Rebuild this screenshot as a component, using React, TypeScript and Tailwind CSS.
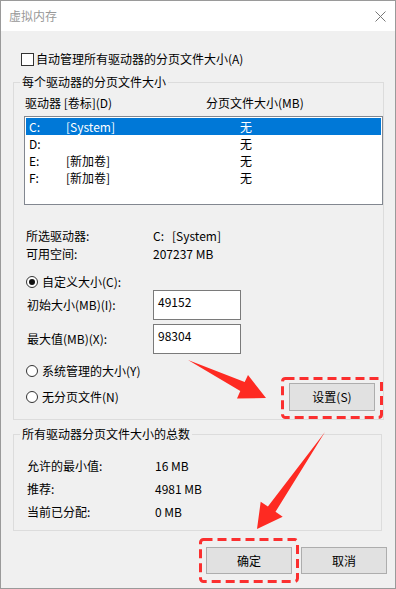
import React from "react"

const drives = [
    { id: "C:", label: "[System]", size: "无", selected: true },
    { id: "D:", label: "", size: "无" },
    { id: "E:", label: "[新加卷]", size: "无" },
    { id: "F:", label: "[新加卷]", size: "无" },
]

const totals = [
    { label: "允许的最小值:", value: "16 MB" },
    { label: "推荐:", value: "4981 MB" },
    { label: "当前已分配:", value: "0 MB" },
]

const Radio = ({ checked, label }: { checked?: boolean; label: string }) => (
    <div className="flex items-center gap-[4px]">
        <span className="flex items-center justify-center w-[12px] h-[12px] rounded-full border border-[#333] bg-white">
            {checked && <span className="w-[6px] h-[6px] rounded-full bg-[#111]" />}
        </span>
        <span>{label}</span>
    </div>
)

// red dashed annotation frame, drawn so the dash length matches the screenshot
const DashFrame = ({ w, h, className }: { w: number; h: number; className: string }) => (
    <svg className={`absolute pointer-events-none ${className}`} width={w} height={h}>
        <rect
            x="1.5"
            y="1.5"
            width={w - 3}
            height={h - 3}
            rx="3"
            fill="none"
            stroke="#fb2f2f"
            strokeWidth="3"
            strokeDasharray="9 5"
        />
    </svg>
)

const WinButton = ({
    children,
    className = "",
    frame,
}: {
    children: React.ReactNode
    className?: string
    frame?: React.ReactNode
}) => (
    <button
        className={`relative flex items-center justify-center border border-[#adadad] bg-[#e1e1e1] text-[12px] text-black ${className}`}
    >
        {children}
        {frame}
    </button>
)

// the two red annotation arrows lie over the dialog
const Arrows = () => (
    <svg
        className="absolute inset-0 pointer-events-none"
        width="396"
        height="589"
        viewBox="0 0 396 589"
    >
        <polygon
            fill="#fe2a22"
            points="188,360 244.7,381.9 248,375 266,398 237,398.5 240.3,391.1"
        />
        <polygon
            fill="#fe2a22"
            points="325,432 275.5,511.8 282.7,516.7 257,529 260.7,501.7 267.9,506.6"
        />
    </svg>
)

export default function App() {
    return (
        <div className="relative w-[396px] h-[589px] font-['Noto_Sans_CJK_SC','Noto_Sans',sans-serif] text-[12px] leading-[16px] text-black">
            <div className="flex flex-col w-full h-full border border-[#9a9a9a] bg-[#f0f0f0]">
                {/* title bar */}
                <div className="flex items-center justify-between h-[30px] bg-white pl-[8px] pr-[9px]">
                    <span className="text-[#999]">虚拟内存</span>
                    <svg width="11" height="11" viewBox="0 0 11 11">
                        <path d="M0.5 0.5 L10.5 10.5 M10.5 0.5 L0.5 10.5" stroke="#777" strokeWidth="1" />
                    </svg>
                </div>

                <div className="flex flex-col pl-[12px] pr-[13px]">
                    <div className="flex items-center h-[16px] mt-[20px] ml-[8px] gap-[2px]">
                        <span className="w-[13px] h-[13px] border border-[#333] bg-white" />
                        <span>自动管理所有驱动器的分页文件大小(A)</span>
                    </div>

                    <fieldset className="mt-[7px] p-0 border border-[#dcdcdc] pb-[8px]">
                        <legend className="ml-[6px] px-[2px]">每个驱动器的分页文件大小</legend>
                        <div className="flex items-center h-[16px] mt-[5px] pl-[11px]">
                            <span className="w-[181px]">驱动器 [卷标](D)</span>
                            <span>分页文件大小(MB)</span>
                        </div>
                        <div className="mt-[5px] ml-[10px] w-[359px] h-[89px] border border-[#828790] bg-white pt-[1px] px-[1px]">
                            {drives.map(d => (
                                <div
                                    key={d.id}
                                    className={`flex items-center h-[17px] pl-[3px] ${d.selected ? "bg-[#0078d7] text-white" : ""}`}
                                >
                                    <span className="w-[37px]">{d.id}</span>
                                    <span className="w-[174px]">{d.label}</span>
                                    <span>{d.size}</span>
                                </div>
                            ))}
                        </div>

                        <div className="flex items-center h-[18px] mt-[22px] pl-[12px]">
                            <span className="w-[127px]">所选驱动器:</span>
                            <span>C:&nbsp;&nbsp;&nbsp;[System]</span>
                        </div>
                        <div className="flex items-center h-[18px] pl-[12px]">
                            <span className="w-[127px]">可用空间:</span>
                            <span>207237 MB</span>
                        </div>

                        <div className="flex items-center h-[16px] mt-[11px] pl-[12px]">
                            <Radio checked label="自定义大小(C):" />
                        </div>
                        <div className="flex items-center h-[30px] pl-[13px]">
                            <span className="w-[126px]">初始大小(MB)(I):</span>
                            <div className="w-[88px] h-[30px] border border-[#7a7a7a] bg-white pl-[4px] pt-[3px]">49152</div>
                        </div>
                        <div className="flex items-center h-[30px] mt-[4px] pl-[13px]">
                            <span className="w-[126px]">最大值(MB)(X):</span>
                            <div className="w-[88px] h-[30px] border border-[#7a7a7a] bg-white pl-[4px] pt-[3px]">98304</div>
                        </div>

                        <div className="flex items-center h-[16px] mt-[9px] pl-[12px]">
                            <Radio label="系统管理的大小(Y)" />
                        </div>
                        <div className="flex items-center h-[28px] mt-[4px] pl-[12px] pr-[8px]">
                            <Radio label="无分页文件(N)" />
                            <WinButton
                                className="ml-auto w-[86px] h-[28px]"
                                frame={<DashFrame w={102} h={42} className="-left-[9px] -top-[7px]" />}
                            >
                                设置(S)
                            </WinButton>
                        </div>
                    </fieldset>

                    <fieldset className="mt-[6px] p-0 border border-[#dcdcdc] pb-[7px]">
                        <legend className="ml-[6px] px-[2px]">所有驱动器分页文件大小的总数</legend>
                        <div className="mt-[12px]">
                            {totals.map(t => (
                                <div key={t.label} className="flex items-center h-[23px] pl-[13px]">
                                    <span className="w-[128px]">{t.label}</span>
                                    <span>{t.value}</span>
                                </div>
                            ))}
                        </div>
                    </fieldset>
                </div>

                <div className="flex justify-end gap-[9px] mt-[16px] pr-[8px]">
                    <WinButton
                        className="w-[86px] h-[27px]"
                        frame={<DashFrame w={100} h={45} className="-left-[8px] -top-[10px]" />}
                    >
                        确定
                    </WinButton>
                    <WinButton className="w-[86px] h-[27px]">取消</WinButton>
                </div>
            </div>
            <Arrows />
        </div>
    )
}
